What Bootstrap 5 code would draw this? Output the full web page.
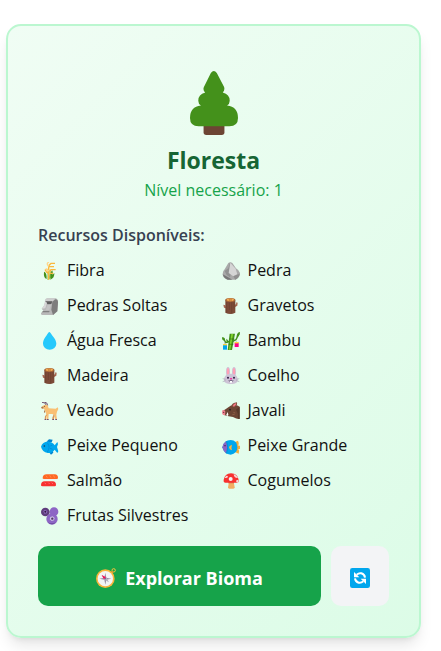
<!DOCTYPE html>
<html lang="pt-BR">
<head>
<meta charset="utf-8">
<meta name="viewport" content="width=device-width, initial-scale=1">
<title>Floresta</title>
<link href="https://cdn.jsdelivr.net/npm/bootstrap@5.3.0/dist/css/bootstrap.min.css" rel="stylesheet">
<style>
  body { font-family: "Segoe UI", "Open Sans", "Noto Sans", sans-serif; font-size: 16px; line-height: 25px; color: #111; background: #fff; }
  .page { padding: 24px 20px 14px 6px; }
  .biome { border: 2px solid #bbf7d0; border-radius: 15px; padding: 45px 30px 30px; background: linear-gradient(135deg, #f0fdf4, #dcfce7); box-shadow: 0 10px 15px -3px rgba(0,0,0,.1), 0 4px 6px -4px rgba(0,0,0,.1); }
  .tree { width: 48px; height: 64px; }
  .biome-title { font-size: 23px; line-height: 30px; font-weight: 700; color: #166534; margin: 10px 0 3px; }
  .level { color: #16a34a; margin-bottom: 20px; }
  .res-title { font-size: 16px; line-height: 25px; font-weight: 600; color: #374151; margin-bottom: 10px; }
  .res-list { row-gap: 10px; margin-bottom: 18px; --bs-gutter-x: 10px; }
  .res-item { gap: 5px; white-space: nowrap; }
  .ico { width: 18px; height: 18px; margin: 0 3px; flex: none; }
  .actions { gap: 10px; }
  .act { height: 60px; border: 0; border-radius: 10px; padding: 4px 15px 0; }
  .explore { background: #16a34a; color: #fff; font-size: 18px; font-weight: 700; gap: 9px; }
  .explore:hover { background: #15803d; color: #fff; }
  .reload { width: 58px; background: #f3f4f6; }
  .reload:hover { background: #e5e7eb; }
  .act svg { width: 20px; height: 20px; flex: none; }
</style>
<script src="https://cdn.jsdelivr.net/npm/bootstrap@5.3.0/dist/js/bootstrap.bundle.min.js"></script>
</head>
<body>
<svg class="d-none" aria-hidden="true">
  <symbol id="log" viewBox="0 0 54 54">
    <path d="M4 23l6 2 3 9-7-2zM47 17l-1 9-8 5-2-7 6-2 1-6z" fill="#a76650"/>
    <path d="M10 8q15-9 30 0v39q-15 8-30 0z" fill="#7d4b38"/>
    <path d="M14 15v33M22 17v22M29 16v34M36 14v20" stroke="#69402f" stroke-width="2" fill="none"/>
    <ellipse cx="25" cy="9" rx="15" ry="6" fill="#a66537"/><ellipse cx="25" cy="8.500" rx="11" ry="4" fill="#f5ad51"/><ellipse cx="25" cy="9" rx="5" ry="1.800" fill="none" stroke="#a66537" stroke-width="1.500"/>
  </symbol>
</svg>
<main class="page">
  <section class="biome">
    <header class="text-center">
      <svg class="tree d-block mx-auto" viewBox="0 0 145 193" aria-hidden="true">
        <path d="M41 163h63v22q0 8-8 8H49q-8 0-8-8z" fill="#6d4534"/>
        <path d="M63 6q9-12 18 0l22 42q3 9-4 17 21 5 21 25 0 10-8 14 33 3 33 38 0 25-26 25H26Q0 167 0 142q0-35 33-38-8-4-8-14 0-20 21-25-8-8-4-17z" fill="#44911b"/>
      </svg>
      <h1 class="biome-title">Floresta</h1>
      <p class="level">Nível necessário: 1</p>
    </header>
    <h2 class="res-title">Recursos Disponíveis:</h2>
    <ul class="row res-list list-unstyled">
      <li class="col-6 d-flex align-items-center res-item">
        <svg class="ico" viewBox="0 0 54 54" aria-hidden="true"><path d="M9 29q9 3 8 22Q7 48 9 29zM34 25q5 14-8 27-3-17 8-27zM31 42q5-4 9-9 1 15-12 20z" fill="#44911b"/><path d="M21 29v25M27 23v29" stroke="#8bc34a" stroke-width="3"/><path d="M13 24q6-4 9 0v9q-6-1-9-9zM23 53V17q0-9 7-13h12M24 14h15M27 29l3-6h14M27 34h10" fill="none" stroke="#fbb83d" stroke-width="4"/><path d="M22 12q-7-8 2-12M14 20l10 7" fill="none" stroke="#ffd58a" stroke-width="4"/></svg>
        <span>Fibra</span></li>
      <li class="col-6 d-flex align-items-center res-item">
        <svg class="ico" viewBox="0 0 54 54" aria-hidden="true"><path d="M19 3q6-5 12 0l11 16q9 5 12 14 1 14-14 20H17Q2 48 2 35q1-9 6-13z" fill="#a9a9a9"/><path d="M24 2l-5 17-11 8 6 12 10 7 5-26z" fill="#919191"/><path d="M25 2l16 18 5 17-12 6-14-10z" fill="#d5d5d5"/><path d="M2 37l14 7 15 9H17Q5 49 2 37z" fill="#777"/><path d="M34 43l14-6 5-1q-2 13-13 17z" fill="#8f8f8f"/></svg>
        <span>Pedra</span></li>
      <li class="col-6 d-flex align-items-center res-item">
        <svg class="ico" viewBox="0 0 54 54" aria-hidden="true"><path d="M14 6l5-2h26q6 2 6 11l-2 28-12 11H4q-5-1-4-6l7-7-5-6 8-10z" fill="#b8b8b8"/><path d="M34 14l9-7q8 0 8 9l-2 27-13 11-5-16z" fill="#7d7d7d"/><path d="M14 6l5-2h24l-8 9H11z" fill="#cdcdcd"/><path d="M12 13h22l-3 8-11 1-4-4z" fill="#5e5e5e"/><path d="M12 13l6 4-5 17-10 1 7-12z" fill="#d8d8d8"/><path d="M20 23h10l-5 16H14z" fill="#c4c4c4"/><path d="M6 42h20l-2 4H3z" fill="#808080"/></svg>
        <span>Pedras Soltas</span></li>
      <li class="col-6 d-flex align-items-center res-item"><svg class="ico" aria-hidden="true"><use href="#log"/></svg><span>Gravetos</span></li>
      <li class="col-6 d-flex align-items-center res-item">
        <svg class="ico" viewBox="0 0 54 54" aria-hidden="true"><path d="M22 2q3-4 6 0c7 11 18 20 18 33a20 18 0 0 1-40 0C6 22 15 13 22 2z" fill="#26c9fc"/></svg>
        <span>Água Fresca</span></li>
      <li class="col-6 d-flex align-items-center res-item">
        <svg class="ico" viewBox="0 0 54 54" aria-hidden="true"><path d="M5 20l6 12 15-5M51 5l-9 18-12 6" fill="none" stroke="#44911b" stroke-width="4"/><path d="M0 16q9-2 9 9Q0 28 0 16zM54 0Q43 2 44 16q10-4 10-16zM13 20q-1 8 3 13 6-8-3-13z" fill="#44911b"/><path d="M23 5h16l-9 49H17z" fill="#44911b"/><path d="M28 6h5l-8 47h-4z" fill="#86d72f"/><path d="M23 21h14M20 37h14" stroke="#306d16" stroke-width="2"/><path d="M8 29v9M43 27v7" stroke="#b4acbc" stroke-width="2"/><path d="M3 36h12v17H3z" fill="#00a6ed"/><path d="M3 36h12v4H3z" fill="#fcd53f"/><path d="M38 32h12v13H38z" fill="#ff0084"/><path d="M38 30h12v4H38z" fill="#fcd53f"/></svg>
        <span>Bambu</span></li>
      <li class="col-6 d-flex align-items-center res-item"><svg class="ico" aria-hidden="true"><use href="#log"/></svg><span>Madeira</span></li>
      <li class="col-6 d-flex align-items-center res-item">
        <svg class="ico" viewBox="0 0 54 54" aria-hidden="true"><ellipse cx="18" cy="14" rx="6" ry="14" fill="#cdc4d6"/><ellipse cx="36" cy="14" rx="6" ry="14" fill="#cdc4d6"/><ellipse cx="18" cy="14" rx="3.500" ry="11" fill="#ff9fb5"/><ellipse cx="36" cy="14" rx="3.500" ry="11" fill="#ff9fb5"/><path d="M27 20c14 0 20 8 20 18 0 9-8 13-20 13S6 47 6 38c0-10 7-18 21-18z" fill="#cdc4d6"/><path d="M2 35l9 2M2 44l9-3M52 35l-9 2M52 44l-9-3" stroke="#998ea4" stroke-width="1.500"/><circle cx="18" cy="32" r="3" fill="#321b41"/><circle cx="36" cy="32" r="3" fill="#321b41"/><path d="M23 34h8l-4 5z" fill="#f70a8d"/><path d="M20 41q4 3 7-1 3 4 7 1" fill="none" stroke="#321b41" stroke-width="2"/><path d="M24 42h6v5h-6z" fill="#fff"/></svg>
        <span>Coelho</span></li>
      <li class="col-6 d-flex align-items-center res-item">
        <svg class="ico" viewBox="0 0 54 54" aria-hidden="true"><path d="M3 1q10-1 13 9M10 0q10 1 10 11" fill="none" stroke="#70506e" stroke-width="3"/><path d="M3 13l9-5 8 2 3 9 21 1 6-4 2 5-4 8-2 9 2 15h-5l-3-14-6-3H23l-1 17h-5l-2-20-6-13-8-1z" fill="#f9c074"/><path d="M20 36l-5 8v9h-4l1-11zM38 37l-4 10v6h4l3-12z" fill="#d99859"/><path d="M0 15l5-1 4 4-6 2zM9 23l4 7-4 3z" fill="#a87551"/><path d="M11 51h5v3h-5zM18 51h5v3h-5zM34 51h5v3h-5zM43 51h5v3h-5z" fill="#70506e"/><circle cx="10" cy="13" r="1.500" fill="#402a32"/></svg>
        <span>Veado</span></li>
      <li class="col-6 d-flex align-items-center res-item">
        <svg class="ico" viewBox="0 0 54 54" aria-hidden="true"><path d="M3 26q9-4 16-10 9-8 18-7 11 0 16 5v37q-11 0-20-6-13-2-25-5-6-4-5-14z" fill="#6d4534"/><path d="M53 14v37l-6-1 1-14-6-13z" fill="#573829"/><path d="M28 14q1-12 17-13 2 11-8 15z" fill="#7d4b38"/><path d="M32 12q2-8 11-9 0 8-7 11z" fill="#f37884"/><path d="M1 25q8-3 9 4l-1 11q-8 0-9-7z" fill="#ef8290"/><circle cx="5" cy="31" r="2" fill="#63303e"/><path d="M12 39q4-2 3-9 7 8 2 12z" fill="#fff"/><circle cx="24" cy="23" r="2.500" fill="#1c1c1c"/><path d="M34 31l6 2M31 38l7-1" stroke="#9c6a4f" stroke-width="2"/></svg>
        <span>Javali</span></li>
      <li class="col-6 d-flex align-items-center res-item">
        <svg class="ico" viewBox="0 0 54 54" aria-hidden="true"><path d="M16 14l8-7 11 1-3 8zM23 44l7 9 7-6-3-8z" fill="#0084ce"/><path d="M0 29q4-15 21-15 14 0 20 11l8-10 2 6-3 9 4 13-3 5-8-10Q33 49 20 48 4 45 0 29z" fill="#00a6ed"/><path d="M20 19q9 12-1 26M28 27l6-3M27 34l8 3" fill="none" stroke="#0084ce" stroke-width="2"/><circle cx="10" cy="27" r="2.500" fill="#163d59"/></svg>
        <span>Peixe Pequeno</span></li>
      <li class="col-6 d-flex align-items-center res-item">
        <svg class="ico" viewBox="0 0 54 54" aria-hidden="true"><path d="M38 16l10-5q4 6 1 15h5v10h-5q5 8 1 14L37 44z" fill="#f3ad3d"/><path d="M1 31Q6 9 26 9q20 1 20 22 0 20-20 22Q6 52 1 31z" fill="#00a6ed"/><path d="M1 31Q4 18 12 13q7 18 0 36Q4 43 1 31z" fill="#8d65c5"/><path d="M30 23q-9 3-9 8 1 7 9 9-3-9 0-17z" fill="#fcb83d"/><path d="M14 12q6 19 0 38" fill="none" stroke="#0084ce" stroke-width="2"/><circle cx="9" cy="26" r="2" fill="#321b41"/></svg>
        <span>Peixe Grande</span></li>
      <li class="col-6 d-flex align-items-center res-item">
        <svg class="ico" viewBox="0 0 54 54" aria-hidden="true"><path d="M7 20h40v3H8z" fill="#f4e8ee"/><path d="M5 19q0-12 12-12h24q10 0 10 11 0 3-4 3H9q-4 0-4-2z" fill="#ff6723"/><path d="M15 11l4 6M26 10l4 7M37 10l4 7" stroke="#ff9a62" stroke-width="2"/><path d="M0 40q0-12 11-12h24q10 0 10 11 0 4-4 4H5q-5 0-5-3z" fill="#f8312f"/><path d="M11 33l4 3M22 32l4 4M32 32l4 4" stroke="#ff8092" stroke-width="2"/></svg>
        <span>Salmão</span></li>
      <li class="col-6 d-flex align-items-center res-item">
        <svg class="ico" viewBox="0 0 54 54" aria-hidden="true"><path d="M21 29h14l3 17q0 4-4 4H22q-4 0-4-4z" fill="#f3ad61"/><path d="M19 29h17v5H19z" fill="#d67d53"/><path d="M5 24Q8 5 27 4q20 1 23 20 1 8-5 8H10q-6 0-5-8z" fill="#f8312f"/><circle cx="26" cy="21" r="6" fill="#f4f4f4"/><path d="M13 11q5 0 5 4-4 4-10 2zM35 6q10 4 13 12-12 1-13-12zM43 25l6-2q2 8-4 9-4-3-2-7z" fill="#f4d9d9"/></svg>
        <span>Cogumelos</span></li>
      <li class="col-6 d-flex align-items-center res-item">
        <svg class="ico" viewBox="0 0 54 54" aria-hidden="true"><circle cx="39" cy="14" r="13" fill="#8d65c5"/><circle cx="13" cy="15" r="13" fill="#5f3d7c"/><circle cx="33" cy="36" r="17" fill="#8d65c5"/><path d="M7 12l5-4 7 4-1 7-8 1z" fill="#936dc1"/><circle cx="13" cy="14" r="3" fill="#321b41"/><path d="M28 30l7-2 6 5-2 7-7 2-6-5z" fill="#cdc4e6"/><circle cx="34" cy="35" r="3.500" fill="#533566"/><path d="M18 44q12 9 27 2-12 12-27-2z" fill="#6d4aa0"/></svg>
        <span>Frutas Silvestres</span></li>
    </ul>
    <div class="d-flex actions">
      <button type="button" class="btn act explore flex-grow-1 d-flex align-items-center justify-content-center">
        <svg viewBox="0 0 60 60" aria-hidden="true"><circle cx="53" cy="7" r="5" fill="none" stroke="#f9c23c" stroke-width="3"/><path d="M44 12l6-4 3 5-5 4z" fill="#d9952c"/><circle cx="28" cy="32" r="28" fill="#f9b43c"/><circle cx="28" cy="32" r="23" fill="#f4f4f4"/><path d="M28 14l3 15 15 3-15 3-3 15-3-15-15-3 15-3z" fill="#998ea4"/><path d="M17 21l14 8 8 14-14-8z" fill="#b4acbc"/><path d="M17 21l13 7-6 6z" fill="#f70a55"/><circle cx="28" cy="32" r="2" fill="#635994"/></svg>
        <span>Explorar Bioma</span>
      </button>
      <button type="button" class="btn act reload d-flex align-items-center justify-content-center" aria-label="Atualizar">
        <svg viewBox="0 0 60 60" aria-hidden="true"><rect width="60" height="60" rx="7" fill="#00a6ed"/><path d="M20 20q7-6 14-4 10 3 11 13M40 40q-7 6-14 4-10-3-11-13" fill="none" stroke="#fff" stroke-width="6"/><path d="M12 12v16h16zM48 48V32H32z" fill="#fff"/></svg>
      </button>
    </div>
  </section>
</main>
</body>
</html>
